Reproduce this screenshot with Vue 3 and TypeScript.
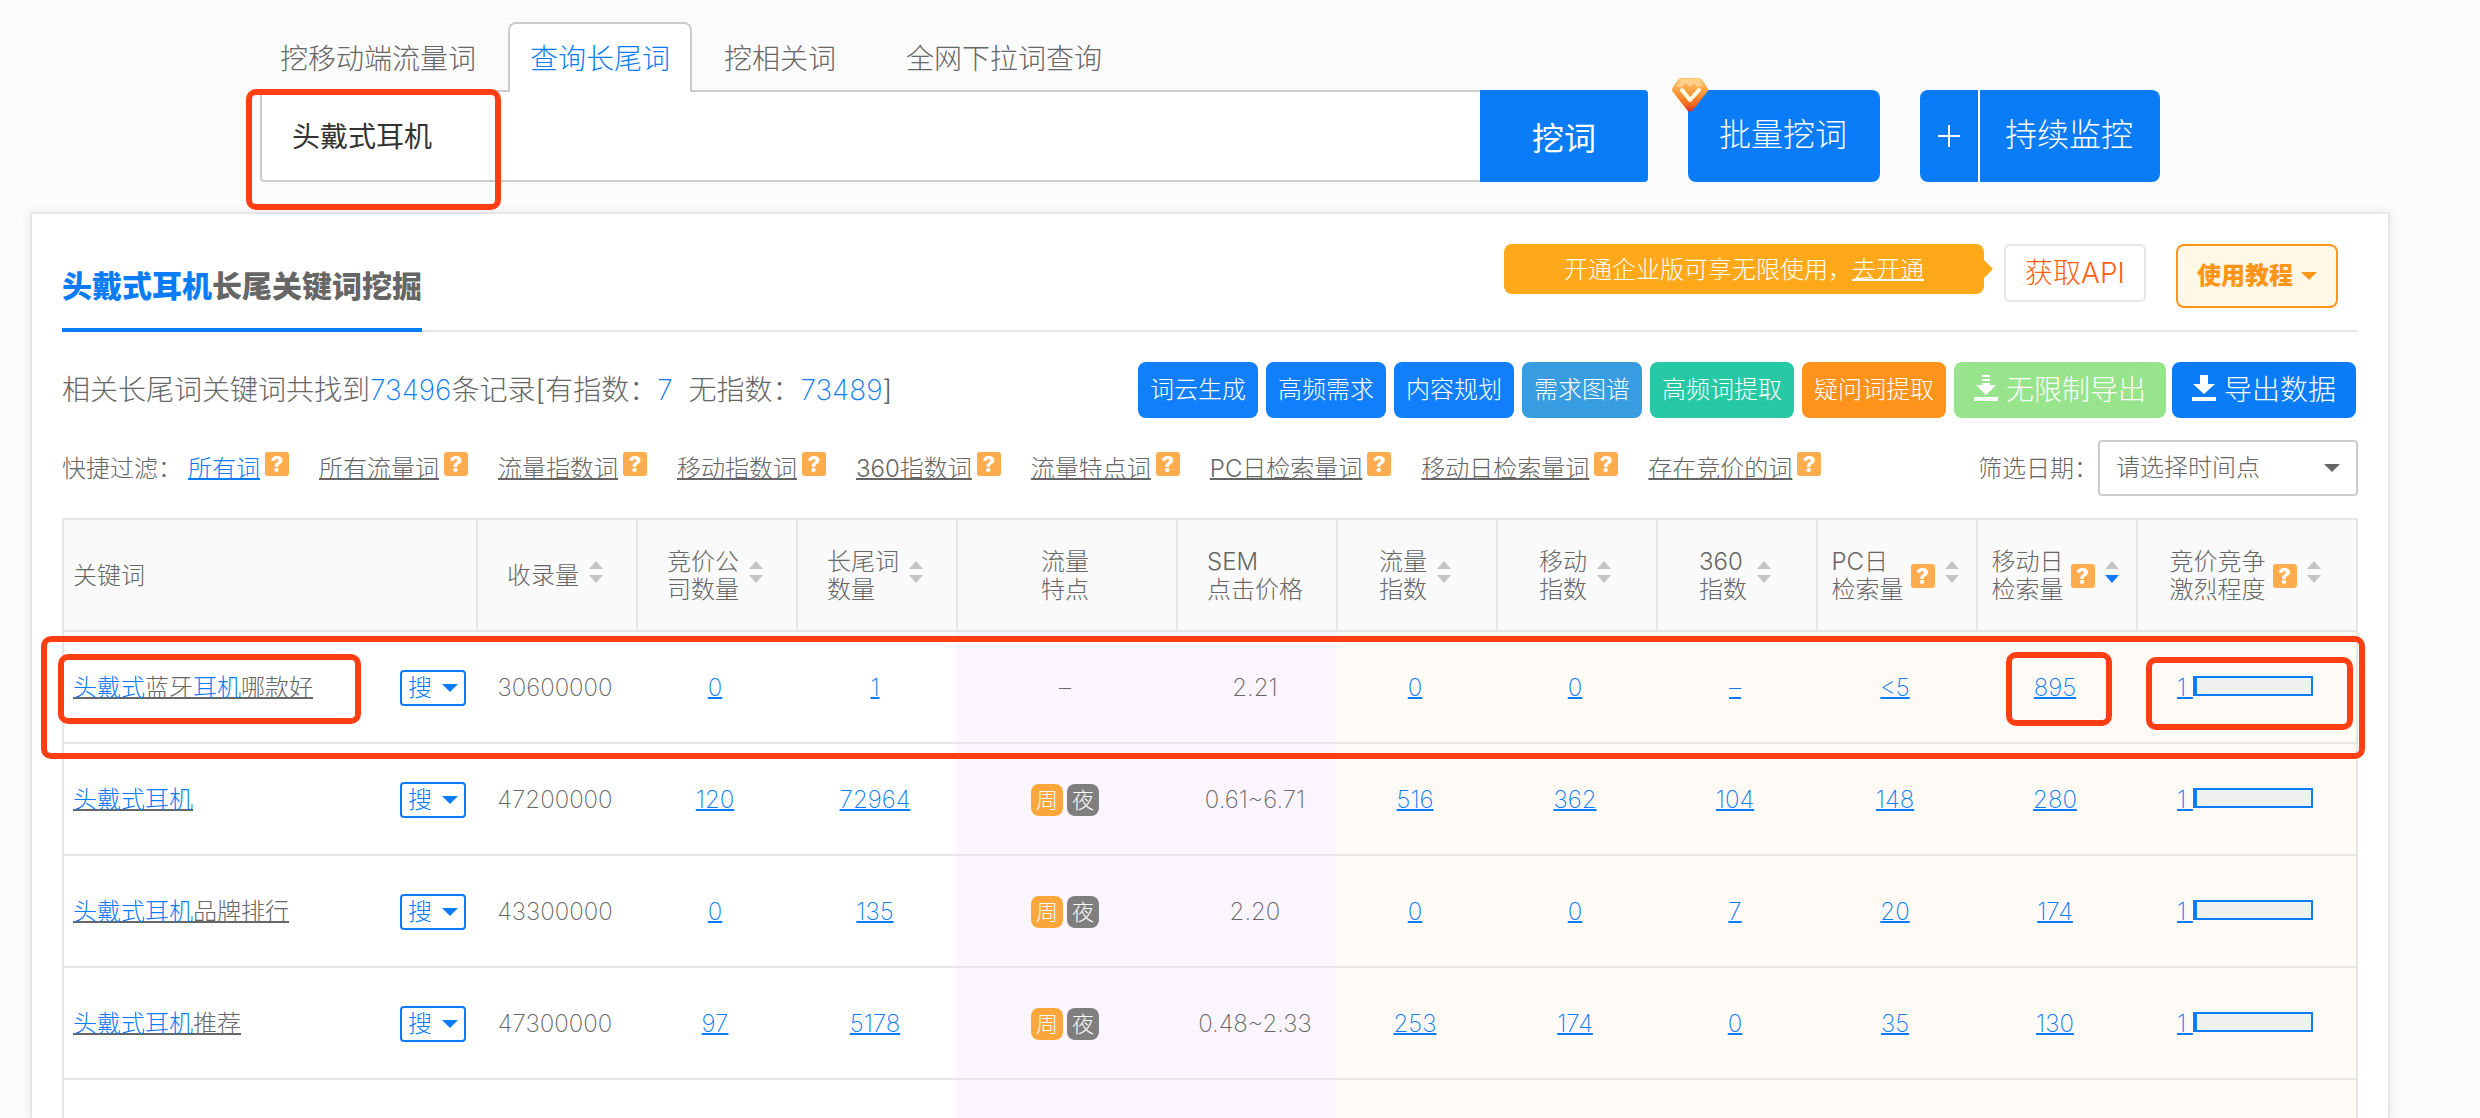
<script setup lang="ts">
import { ref } from 'vue'

interface Tab { label: string; active?: boolean; spaced?: boolean }
interface Action { label: string; tone: string; icon?: boolean }
interface Column { lines: string[]; help?: boolean; sort?: 'none' | 'desc'; kind: string }
interface Part { text: string; hit: boolean }
interface Row {
  keyword: Part[]
  indexed: string
  bidders: string
  longTail: string
  traits: boolean
  price: string
  metrics: string[]
  level: string
  marked?: boolean
}

const query = ref('头戴式耳机')
const period = ref('')

const tabs: Tab[] = [
  { label: '挖移动端流量词' },
  { label: '查询长尾词', active: true },
  { label: '挖相关词' },
  { label: '全网下拉词查询', spaced: true },
]

const actions: Action[] = [
  { label: '词云生成', tone: 'blue' },
  { label: '高频需求', tone: 'blue' },
  { label: '内容规划', tone: 'blue' },
  { label: '需求图谱', tone: 'sky' },
  { label: '高频词提取', tone: 'teal' },
  { label: '疑问词提取', tone: 'orange' },
  { label: '无限制导出', tone: 'green', icon: true },
  { label: '导出数据', tone: 'primary', icon: true },
]

const filters: string[] = [
  '所有词', '所有流量词', '流量指数词', '移动指数词', '360指数词',
  '流量特点词', 'PC日检索量词', '移动日检索量词', '存在竞价的词',
]

const columns: Column[] = [
  { lines: ['关键词'], kind: 'word' },
  { lines: ['收录量'], sort: 'none', kind: 'num' },
  { lines: ['竞价公', '司数量'], sort: 'none', kind: 'num' },
  { lines: ['长尾词', '数量'], sort: 'none', kind: 'num' },
  { lines: ['流量', '特点'], kind: 'trait' },
  { lines: ['SEM', '点击价格'], kind: 'num' },
  { lines: ['流量', '指数'], sort: 'none', kind: 'num' },
  { lines: ['移动', '指数'], sort: 'none', kind: 'num' },
  { lines: ['360', '指数'], sort: 'none', kind: 'num' },
  { lines: ['PC日', '检索量'], help: true, sort: 'none', kind: 'num' },
  { lines: ['移动日', '检索量'], help: true, sort: 'desc', kind: 'num' },
  { lines: ['竞价竞争', '激烈程度'], help: true, sort: 'none', kind: 'level' },
]

const rows: Row[] = [
  {
    keyword: [
      { text: '头戴式', hit: true }, { text: '蓝牙', hit: false },
      { text: '耳机', hit: true }, { text: '哪款好', hit: false },
    ],
    indexed: '30600000', bidders: '0', longTail: '1', traits: false, price: '2.21',
    metrics: ['0', '0', '–', '<5', '895'], level: '1', marked: true,
  },
  {
    keyword: [{ text: '头戴式耳机', hit: true }],
    indexed: '47200000', bidders: '120', longTail: '72964', traits: true, price: '0.61~6.71',
    metrics: ['516', '362', '104', '148', '280'], level: '1',
  },
  {
    keyword: [{ text: '头戴式耳机', hit: true }, { text: '品牌排行', hit: false }],
    indexed: '43300000', bidders: '0', longTail: '135', traits: true, price: '2.20',
    metrics: ['0', '0', '7', '20', '174'], level: '1',
  },
  {
    keyword: [{ text: '头戴式耳机', hit: true }, { text: '推荐', hit: false }],
    indexed: '47300000', bidders: '97', longTail: '5178', traits: true, price: '0.48~2.33',
    metrics: ['253', '174', '0', '35', '130'], level: '1',
  },
]
</script>

<template>
  <div class="page">
    <header class="top">
      <nav class="tabs">
        <a v-for="tab in tabs" :key="tab.label" href="#" class="tab" :class="{ active: tab.active, spaced: tab.spaced }">{{ tab.label }}</a>
      </nav>
      <form class="search" @submit.prevent>
        <input v-model="query" class="query" type="text" aria-label="关键词" />
        <button class="dig" type="submit">挖词</button>
        <button class="batch" type="button">
          <svg class="gem" width="36" height="34" viewBox="0 0 36 34" aria-hidden="true">
            <defs>
              <linearGradient id="gem-fill" x1="0" y1="0" x2="0" y2="1">
                <stop offset="0" stop-color="#ffc36b" />
                <stop offset="0.45" stop-color="#fb9a3a" />
                <stop offset="0.8" stop-color="#f2681a" />
                <stop offset="1" stop-color="#d92a35" />
              </linearGradient>
            </defs>
            <path d="M9 0H27Q29 0 30 2L35 9Q37 12 35 14L21 32Q18 35 15 32L1 14Q-1 12 1 9L6 2Q7 0 9 0Z" fill="url(#gem-fill)" />
            <path d="M9 1H27L31 8L25 9L22 5L18 9L13 5L10 9L4 9Z" fill="#ffe0a8" opacity="0.6" />
            <path d="M10 12L18 22L27 12" fill="none" stroke="#fffbe8" stroke-width="4" stroke-linecap="round" stroke-linejoin="round" />
          </svg>
          批量挖词
        </button>
        <div class="monitor">
          <button class="plus" type="button" aria-label="添加">
            <svg width="22" height="22" viewBox="0 0 22 22"><path d="M11 0V22M0 11H22" stroke="#fff" stroke-width="2" /></svg>
          </button>
          <button class="watch" type="button">持续监控</button>
        </div>
        <span class="mark mark-query"></span>
      </form>
    </header>

    <main class="card">
      <section class="head">
        <h1 class="title"><em>头戴式耳机</em>长尾关键词挖掘</h1>
        <div class="head-tools">
          <p class="promo">开通企业版可享无限使用，<a href="#">去开通</a></p>
          <button class="api" type="button">获取API</button>
          <button class="guide" type="button">
            使用教程
            <svg width="16" height="8" viewBox="0 0 16 8"><path d="M0 0H16L8 8Z" fill="currentColor" /></svg>
          </button>
        </div>
      </section>

      <section class="summary">
        <p class="count">相关长尾词关键词共找到<b>73496</b>条记录[有指数：<b>7</b>&nbsp; 无指数：<b>73489</b>]</p>
        <div class="actions">
          <button v-for="a in actions" :key="a.label" type="button" class="action" :class="[a.tone, { large: a.icon }]">
            <svg v-if="a.icon" width="24" height="26" viewBox="0 0 24 26">
              <path v-if="a.tone === 'green'" d="M8 0H16V2H8ZM8 4H16V6H8ZM8 8H16V10H22L12 20L2 10H8Z" fill="#fff" />
              <path v-else d="M8 0H16V9H23L12 19L1 9H8Z" fill="#fff" />
              <path d="M0 22H24V26H0Z" fill="#fff" />
            </svg>
            {{ a.label }}
          </button>
        </div>
      </section>

      <section class="filters">
        <span class="label">快捷过滤：</span>
        <ul class="filter-list">
          <li v-for="(f, i) in filters" :key="f">
            <a href="#" :class="{ current: i === 0 }">{{ f }}</a>
            <span class="help">?</span>
          </li>
        </ul>
        <label class="label period-label" for="period">筛选日期：</label>
        <span class="period">
          <select id="period" v-model="period">
            <option value="">请选择时间点</option>
          </select>
          <svg class="period-caret" width="16" height="8" viewBox="0 0 16 8"><path d="M0 0H16L8 8Z" fill="#666" /></svg>
        </span>
      </section>

      <div class="grid">
        <table>
          <colgroup>
            <col v-for="(c, i) in columns" :key="i" :class="'col-' + c.kind" />
          </colgroup>
          <thead>
            <tr>
              <th v-for="(c, i) in columns" :key="i" scope="col">
                <div class="th" :class="c.kind">
                  <span class="th-text"><span v-for="l in c.lines" :key="l">{{ l }}</span></span>
                  <span v-if="c.help" class="help">?</span>
                  <svg v-if="c.sort" class="sort" width="14" height="22" viewBox="0 0 14 22">
                    <path d="M7 0L14 8H0Z" fill="#c4c4c4" />
                    <path d="M7 22L0 14H14Z" :fill="c.sort === 'desc' ? '#1677ff' : '#c4c4c4'" />
                  </svg>
                </div>
              </th>
            </tr>
          </thead>
          <tbody>
            <tr v-for="(r, ri) in rows" :key="ri">
              <td>
                <div class="word-cell">
                  <a href="#" class="word"><span v-for="p in r.keyword" :key="p.text" :class="{ hit: p.hit }">{{ p.text }}</span></a>
                  <button class="lookup" type="button">
                    搜
                    <svg width="16" height="8" viewBox="0 0 16 8"><path d="M0 0H16L8 8Z" fill="currentColor" /></svg>
                  </button>
                </div>
                <span v-if="r.marked" class="mark mark-word"></span>
              </td>
              <td>{{ r.indexed }}</td>
              <td><a href="#">{{ r.bidders }}</a></td>
              <td><a href="#">{{ r.longTail }}</a></td>
              <td class="lilac">
                <div v-if="r.traits" class="traits"><span class="week">周</span><span class="night">夜</span></div>
                <template v-else>–</template>
              </td>
              <td class="lilac">{{ r.price }}</td>
              <td v-for="(m, mi) in r.metrics" :key="mi" class="cream">
                <a href="#">{{ m }}</a>
                <span v-if="r.marked && mi === 4" class="mark mark-metric"></span>
              </td>
              <td class="cream">
                <a href="#" class="level"><span class="level-num">{{ r.level }}&nbsp;</span><span class="bar"></span></a>
                <span v-if="r.marked" class="mark mark-level"></span>
              </td>
            </tr>
            <tr class="rest">
              <td v-for="(c, i) in columns" :key="i" :class="{ lilac: i === 4 || i === 5, cream: i > 5 }"></td>
            </tr>
          </tbody>
        </table>
        <span class="mark mark-row"></span>
      </div>
    </main>
  </div>
</template>

<style>
body {
  margin: 0;
  background: #fbfbfb;
}
</style>

<style scoped>
* {
  box-sizing: border-box;
}
.page {
  min-height: 100vh;
  overflow: hidden;
  font-family: Inter, "Noto Sans CJK SC", sans-serif;
  font-weight: 300;
  font-size: 24px;
  line-height: 28px;
  color: #666;
  display: flex;
  flex-direction: column;
}
button,
input,
select {
  font: inherit;
  color: inherit;
  margin: 0;
  padding: 0;
  border: 0;
  background: none;
}
button {
  cursor: pointer;
  white-space: nowrap;
}
a {
  color: #0a7cf7;
  text-decoration: underline 2px;
  text-underline-offset: 1px;
  text-decoration-skip-ink: none;
}

.top {
  padding: 22px 320px 30px 260px;
}
.tabs {
  display: flex;
  gap: 10px;
  margin-left: -2px;
}
.tab {
  position: relative;
  z-index: 1;
  height: 70px;
  padding: 0 20px;
  border: 2px solid transparent;
  border-bottom: 0;
  font-size: 28px;
  line-height: 70px;
  color: #666;
  text-decoration: none;
  white-space: nowrap;
}
.tab.active {
  color: #0a7cf7;
  background: #fff;
  border-color: #ccc;
  border-radius: 8px 8px 0 0;
}
.tab.spaced {
  margin-left: 16px;
}
.search {
  position: relative;
  display: flex;
  margin-top: -2px;
  height: 92px;
}
.query {
  flex: 1;
  min-width: 0;
  padding: 0 30px 2px;
  border: 2px solid #ccc;
  border-right: 0;
  border-radius: 4px 0 0 4px;
  background: #fff;
  font-size: 28px;
  font-weight: 400;
  color: #333;
}
.dig {
  width: 168px;
  padding-top: 6px;
  border-radius: 0 4px 4px 0;
  background: #0a7cf7;
  font-size: 32px;
  font-weight: 400;
  color: #fff;
}
.batch {
  position: relative;
  width: 192px;
  margin-left: 40px;
  padding: 0 2px 2px 0;
  border-radius: 8px;
  background: #0a7cf7;
  font-size: 32px;
  color: #fff;
}
.gem {
  position: absolute;
  left: -16px;
  top: -12px;
}
.monitor {
  display: flex;
  width: 240px;
  margin-left: 40px;
  border-radius: 8px;
  background: #0a7cf7;
  color: #fff;
}
.plus {
  display: flex;
  align-items: center;
  justify-content: center;
  width: 60px;
  border-right: 2px solid #fff;
}
.watch {
  flex: 1;
  padding: 0 2px 2px 0;
  font-size: 32px;
}

.card {
  flex: 1;
  margin: 0 90px 0 30px;
  padding: 0 30px;
  border: 2px solid #e6e6e6;
  border-bottom: 0;
  background: #fff;
  box-shadow: 0 0 10px rgba(0, 0, 0, 0.08);
}
.head {
  display: flex;
  justify-content: space-between;
  height: 118px;
  border-bottom: 2px solid #e6e6e6;
}
.title {
  height: 118px;
  margin: 0;
  padding-top: 14px;
  border-bottom: 4px solid #0a7cf7;
  font-size: 30px;
  font-weight: 900;
  line-height: 116px;
  white-space: nowrap;
}
.title em {
  font-style: normal;
  color: #0a7cf7;
}
.head-tools {
  display: flex;
  align-items: flex-start;
  padding: 30px 20px 0 0;
}
.promo {
  position: relative;
  width: 480px;
  height: 50px;
  margin: 0 20px 0 0;
  border-radius: 8px;
  background: #ffa91a;
  line-height: 52px;
  text-align: center;
  color: #fff;
}
.promo::after {
  content: "";
  position: absolute;
  left: 100%;
  top: 16px;
  border: 9px solid transparent;
  border-left-color: #ffa91a;
  border-right: 0;
}
.promo a {
  color: #fff;
}
.api {
  width: 142px;
  height: 58px;
  margin-right: 30px;
  border: 2px solid #e6e6e6;
  border-radius: 6px;
  font-size: 28px;
  color: #ff5f0f;
}
.guide {
  display: flex;
  align-items: center;
  justify-content: center;
  gap: 8px;
  width: 162px;
  height: 64px;
  border: 2px solid #ff9518;
  border-radius: 8px;
  background: #fff8e6;
  font-weight: 900;
  color: #ff9518;
}

.summary {
  display: flex;
  align-items: center;
  justify-content: space-between;
  margin-top: 30px;
  padding-right: 2px;
}
.count {
  margin: 0;
  font-size: 28px;
  white-space: nowrap;
}
.count b {
  font-weight: 200;
  color: #0a7cf7;
}
.actions {
  display: flex;
  gap: 8px;
}
.action {
  display: flex;
  align-items: center;
  justify-content: center;
  gap: 8px;
  height: 56px;
  padding: 0 12px;
  border-radius: 8px;
  color: #fff;
}
.action.large {
  padding: 0 20px;
  font-size: 28px;
}
.action.large svg {
  margin-bottom: 4px;
}
.blue { background: #117ffb; }
.sky { background: #389de0; }
.teal { background: #26c9a3; }
.orange { background: #fd931b; }
.green { background: #98e48c; }
.action.primary {
  margin-left: -2px;
  background: #0a7cf7;
}

.filters {
  display: flex;
  align-items: center;
  margin-top: 22px;
  height: 56px;
  white-space: nowrap;
}
.filter-list {
  display: flex;
  gap: 30px;
  margin: 0;
  padding: 0 0 0 6px;
  list-style: none;
}
.filter-list li {
  display: flex;
  align-items: center;
  gap: 5px;
}
.filter-list a {
  color: #666;
}
.filter-list a.current {
  color: #0a7cf7;
}
.help {
  flex: none;
  width: 24px;
  height: 24px;
  border-radius: 3px;
  background: #ffac4e;
  font-size: 22px;
  font-weight: 800;
  line-height: 24px;
  text-align: center;
  color: #fff;
}
.label,
.filter-list a {
  padding-top: 2px;
}
.filter-list .help {
  margin-bottom: 8px;
}
.period-label {
  margin-left: auto;
}
.period {
  position: relative;
  width: 260px;
}
.period select {
  width: 100%;
  height: 56px;
  padding: 0 16px;
  border: 2px solid #ccc;
  border-radius: 4px;
  background: #fff;
  appearance: none;
}
.period-caret {
  position: absolute;
  right: 18px;
  top: 24px;
  pointer-events: none;
}

.grid {
  position: relative;
  margin-top: 22px;
}
table {
  width: 100%;
  table-layout: fixed;
  border-collapse: separate;
  border-spacing: 0;
}
.col-num { width: 160px; }
.col-trait { width: 220px; }
.col-level { width: 222px; }
th {
  height: 114px;
  padding: 2px 4px 0 0;
  border: solid #e6e6e6;
  border-width: 2px 0 2px 2px;
  background: #fafafa;
  font-weight: 300;
  text-align: left;
}
th:last-child {
  border-right-width: 2px;
}
.th {
  display: flex;
  align-items: center;
  justify-content: center;
  gap: 10px;
}
.th.word {
  justify-content: flex-start;
  padding-left: 9px;
}
.th-text {
  display: flex;
  flex-direction: column;
  white-space: nowrap;
}
.th .help {
  margin-left: -3px;
}
.sort {
  margin-bottom: 8px;
}
td {
  position: relative;
  height: 112px;
  padding: 2px 2px 0 0;
  border-bottom: 2px solid #e6e6e6;
  font-weight: 200;
  text-align: center;
}
td:first-child {
  border-left: 2px solid #e6e6e6;
}
td:last-child {
  border-right: 2px solid #e6e6e6;
}
.rest td {
  height: 38px;
  border-bottom: 0;
}
.lilac { background: #faf5ff; }
.cream { background: #fffaf6; }
.word-cell {
  display: flex;
  align-items: center;
  justify-content: space-between;
  padding: 0 8px 0 9px;
  font-weight: 300;
}
.word {
  color: #666;
}
.hit {
  color: #0a7cf7;
}
.lookup {
  display: flex;
  align-items: center;
  justify-content: space-between;
  width: 66px;
  height: 36px;
  padding: 0 6px;
  border: 2px solid #0a7cf7;
  border-radius: 4px;
  color: #0a7cf7;
}
.traits {
  display: flex;
  justify-content: center;
  gap: 4px;
  font-weight: 300;
}
.traits span {
  width: 32px;
  height: 32px;
  border-radius: 8px;
  font-size: 22px;
  line-height: 32px;
  color: #fff;
}
.week { background: #faa63a; }
.night { background: #7f7f7f; }
.level {
  display: flex;
  align-items: center;
  justify-content: center;
  text-decoration: none;
}
.level-num {
  text-decoration: underline 2px;
  text-underline-offset: 1px;
}
.bar {
  width: 120px;
  height: 20px;
  margin-bottom: 4px;
  border: 2px solid #0a7cf7;
  border-left-width: 4px;
  background: #eff1f1;
}

.mark {
  position: absolute;
  border: 6px solid #ff3f13;
  border-radius: 10px;
  pointer-events: none;
}
.mark-query {
  left: -14px;
  top: -1px;
  width: 255px;
  height: 121px;
}
.mark-row {
  left: -21px;
  right: -7px;
  top: 118px;
  height: 123px;
}
.mark-word {
  left: -6px;
  top: 22px;
  width: 303px;
  height: 70px;
}
.mark-metric {
  left: 30px;
  top: 20px;
  width: 106px;
  height: 74px;
}
.mark-level {
  left: 10px;
  top: 25px;
  width: 207px;
  height: 73px;
}
</style>
